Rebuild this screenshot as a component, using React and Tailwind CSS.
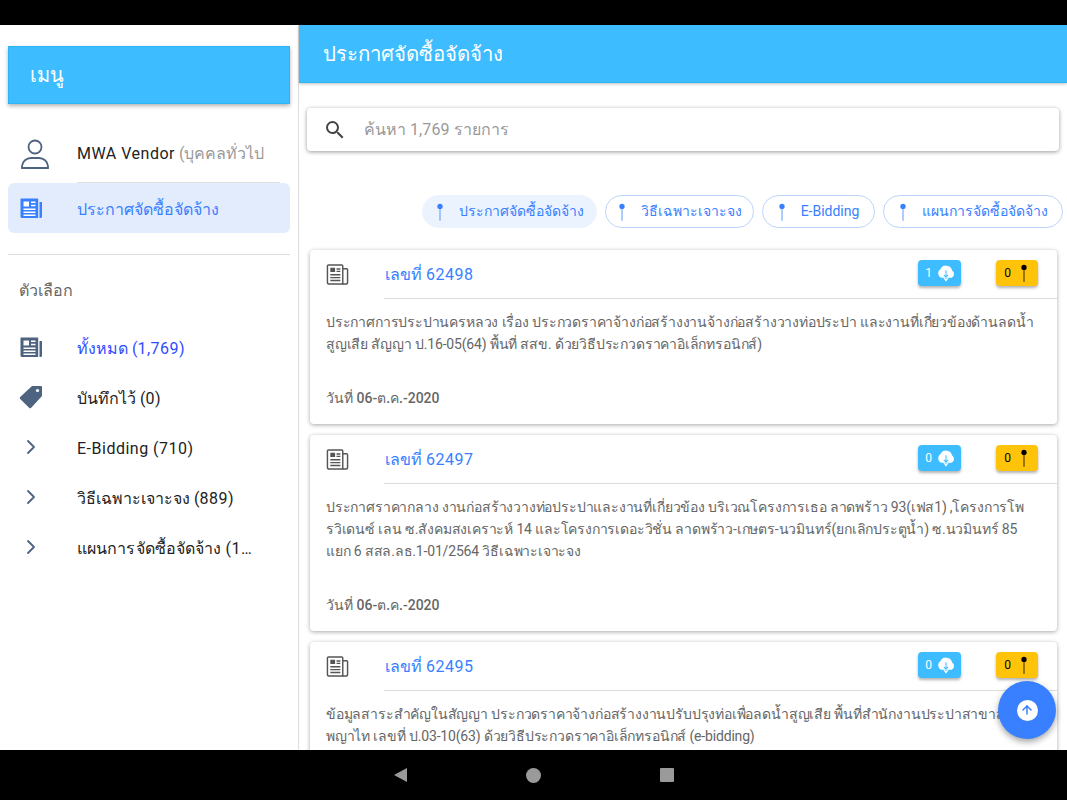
import React from "react";
import { ChevronRight, ArrowUp } from "lucide-react";

const Newspaper = ({ className }) => (
  <svg viewBox="0 0 24 24" className={className} fill="currentColor">
    <path d="M2 2.500h16.500a.7.7 0 0 1 .7.7V22H3a1.500 1.500 0 0 1-1.500-1.500V3A.5.5 0 0 1 2 2.500z" />
    <path d="M20.500 6H23v14.500a1.500 1.500 0 0 1-1.500 1.500h-1z" />
    <path fill="#fff" d="M4.500 5.500H10v5H4.500zM12 5.500h4.500v1.500H12zM12 8.800h4.500v1.500H12zM4.500 12.500h12V14h-12zM4.500 15.500h12V17h-12zM4.500 18.500h12V20h-12z" />
  </svg>
);

const NewspaperOutline = ({ className }) => (
  <svg viewBox="0 0 24 24" className={className} fill="none" stroke="currentColor" strokeWidth="1.500">
    <path d="M2.500 2h14a1 1 0 0 1 1 1v19h-14a2 2 0 0 1-2-2V3a1 1 0 0 1 1-1z" />
    <path d="M17.500 6h4a1 1 0 0 1 1 1v13a2 2 0 0 1-2 2h-3" />
    <path fill="currentColor" stroke="none" d="M4.500 5h5v4.500h-5zM11 5.500h4V7h-4zM11 8h4v1.500h-4zM4.500 11.500H15V13H4.500zM4.500 14.500H15V16H4.500zM4.500 17.500H15V19H4.500z" />
  </svg>
);

const Pin = ({ className }) => (
  <svg viewBox="0 0 10 24" className={className} fill="currentColor">
    <circle cx="5" cy="5" r="3.300" />
    <rect x="4.500" y="5" width="1" height="18" />
  </svg>
);

const CloudDown = () => (
  <svg viewBox="0 0 24 20" className="h-[17px] w-[20px]" fill="#fff">
    <path d="M19.400 6.500A7.500 7.500 0 0 0 5.400 4.500 6 6 0 0 0 6 15h13a5 5 0 0 0 .4-8.500z" />
    <path d="M11.400 6h1.200v9h-1.200zM9 12l.8-.8 2.200 2.200 2.200-2.200.8.8-3 3z" fill="#3dbcff" />
    <path d="M11.400 15h1.200v2l1.400-2h1.300L12 20l-3.300-5H10l1.400 2z" />
  </svg>
);

const TagIcon = () => (
  <svg viewBox="0 0 24 24" className="h-[24px] w-[24px]" fill="#4d6380">
    <path d="M13 1h9a1 1 0 0 1 1 1v9L12.200 22.800a1.500 1.500 0 0 1-2.100 0L1.200 14a1.500 1.500 0 0 1 0-2.100z" />
    <circle cx="18.500" cy="5.500" r="1.600" fill="#fff" />
  </svg>
);

// latin and digits run a bit wider than the thai around them
const Wide = ({ children }) => <span className="tracking-[0.5px]">{children}</span>;

const chips = [
  { label: "ประกาศจัดซื้อจัดจ้าง", active: true, w: "w-[175px]" },
  { label: "วิธีเฉพาะเจาะจง", w: "w-[149px]" },
  { label: "E-Bidding", w: "w-[113px]" },
  { label: "แผนการจัดซื้อจัดจ้าง", w: "w-[180px]" },
];

const cards = [
  {
    no: "62498",
    down: 1,
    date: "06-ต.ค.-2020",
    lines: [
      "ประกาศการประปานครหลวง เรื่อง ประกวดราคาจ้างก่อสร้างงานจ้างก่อสร้างวางท่อประปา และงานที่เกี่ยวข้องด้านลดน้ำ",
      "สูญเสีย สัญญา ป.16-05(64) พื้นที่ สสข. ด้วยวิธีประกวดราคาอิเล็กทรอนิกส์)",
    ],
  },
  {
    no: "62497",
    down: 0,
    date: "06-ต.ค.-2020",
    lines: [
      "ประกาศราคากลาง งานก่อสร้างวางท่อประปาและงานที่เกี่ยวข้อง บริเวณโครงการเธอ ลาดพร้าว 93(เฟส1) ,โครงการโพ",
      "รวิเดนซ์ เลน ซ.สังคมสงเคราะห์ 14 และโครงการเดอะวิชั่น ลาดพร้าว-เกษตร-นวมินทร์(ยกเลิกประตูน้ำ) ซ.นวมินทร์ 85",
      "แยก 6 สสล.ลธ.1-01/2564 วิธีเฉพาะเจาะจง",
    ],
  },
  {
    no: "62495",
    down: 0,
    lines: [
      "ข้อมูลสาระสำคัญในสัญญา ประกวดราคาจ้างก่อสร้างงานปรับปรุงท่อเพื่อลดน้ำสูญเสีย พื้นที่สำนักงานประปาสาขาสุขุมวิท",
      "พญาไท เลขที่ ป.03-10(63) ด้วยวิธีประกวดราคาอิเล็กทรอนิกส์ (e-bidding)",
    ],
  },
];

const NoticeCard = ({ card }) => (
  <div className="mb-[11px] shrink-0 rounded bg-white shadow-[0_1px_4px_rgba(0,0,0,0.35)]">
    <div className="flex h-[48px] items-center pl-[16px] pr-[19px]">
      <NewspaperOutline className="h-[23px] w-[23px] text-[#555]" />
      <span className="ml-[36px] flex-1 pt-px text-[16px] text-[#3880ff]">
        เลขที่ <span className="tracking-[0.5px]">{card.no}</span>
      </span>
      <div className="mb-[2px] flex h-[26px] w-[43px] items-center justify-center gap-[4px] rounded bg-[#3dbcff] pl-[2px] text-[12px] text-white shadow-[0_2px_3px_rgba(0,0,0,0.3)]">
        {card.down}
        <CloudDown />
      </div>
      <div className="mb-[2px] ml-[35px] flex h-[26px] w-[42px] items-center justify-center gap-[9px] rounded bg-[#ffc409] pr-[2px] text-[12px] text-black shadow-[0_2px_3px_rgba(0,0,0,0.3)]">
        0
        <Pin className="h-[22px] w-[8px] text-black" />
      </div>
    </div>
    <div className="ml-[74px] h-px bg-[#dcdcdc]" />
    <div className="pl-4 pt-[12px] text-[14px] leading-[22px] tracking-[-0.18px] text-[#666]">
      {card.lines.map((line) => (
        <div key={line} className="whitespace-nowrap">{line}</div>
      ))}
    </div>
    {card.date ? (
      <div className="px-4 pb-[15px] pt-[32px] text-[14px] leading-[22px] text-[#666]">
        วันที่ <span className="font-medium">{card.date}</span>
      </div>
    ) : (
      <div className="h-[69px]" />
    )}
  </div>
);

const MenuRow = ({ icon, children, className = "" }) => (
  <div className={`flex h-[50px] items-center px-[11px] ${className}`}>
    <div className="flex w-[58px] shrink-0">{icon}</div>
    <div className="min-w-0 flex-1 truncate pt-[3px] text-[16px] text-[#222]">{children}</div>
  </div>
);

const chevron = <ChevronRight className="h-6 w-6 text-[#4d6380]" strokeWidth={1.800} />;

export default function App() {
  return (
    <div className="relative flex h-[800px] w-[1067px] flex-col overflow-hidden bg-white font-['Roboto','Noto_Sans','Liberation_Sans',sans-serif]">
      <div className="h-[25px] shrink-0 bg-black" />
      <div className="flex min-h-0 flex-1">
        {/* sidebar */}
        <aside className="w-[299px] shrink-0 border-r border-[#dedede] pl-2 pr-2">
          <div className="mt-[21px] flex h-[58px] items-center border border-[#2bb5f5] bg-[#3dbcff] pl-[21px] text-[20px] text-white shadow-[0_2px_4px_rgba(0,0,0,0.3)]">
            เมนู
          </div>
          <div className="mt-[21px] flex h-[58px] items-center pl-[12px]">
            <svg viewBox="0 0 30 32" className="h-[32px] w-[30px] text-[#4d6380]" fill="none" stroke="currentColor" strokeWidth="1.800">
              <circle cx="15" cy="9" r="6.500" />
              <path d="M2 30v-2a9 9 0 0 1 9-8h8a9 9 0 0 1 9 8v2z" />
            </svg>
            <div className="ml-[27px] mr-[10px] flex h-full flex-1 items-center overflow-hidden whitespace-nowrap border-b border-[#dedede] text-[16px] text-[#222]">
              <Wide>MWA Vendor</Wide>&nbsp;<span className="text-[#999]">(บุคคลทั่วไป</span>
            </div>
          </div>
          <MenuRow
            className="rounded-md bg-[#e3ecfd]"
            icon={<Newspaper className="h-[24px] w-[24px] text-[#3880ff]" />}
          >
            <span className="text-[#3880ff]">ประกาศจัดซื้อจัดจ้าง</span>
          </MenuRow>
          <div className="mt-[21px] h-px bg-[#dcdcdc]" />
          <div className="mb-[19px] ml-[11px] mt-[24px] text-[16px] leading-[24px] text-[#666]">ตัวเลือก</div>
          <MenuRow icon={<Newspaper className="h-[24px] w-[24px] text-[#4d6380]" />}>
            <span className="text-[#2f4dff]">ทั้งหมด (<Wide>1,769</Wide>)</span>
          </MenuRow>
          <MenuRow icon={<TagIcon />}>บันทึกไว้ (<Wide>0</Wide>)</MenuRow>
          <MenuRow icon={chevron}><Wide>E-Bidding (710)</Wide></MenuRow>
          <MenuRow icon={chevron}>วิธีเฉพาะเจาะจง (<Wide>889</Wide>)</MenuRow>
          <MenuRow icon={chevron}>
            <span className="block w-[181px] truncate tracking-[0.1px]">แผนการจัดซื้อจัดจ้าง <Wide>(170)</Wide></span>
          </MenuRow>
        </aside>

        {/* main */}
        <main className="flex min-w-0 flex-1 flex-col">
          <div className="flex h-[58px] shrink-0 items-center border-b border-[#2bb5f5] bg-[#3dbcff] pl-6 pt-px text-[20.400px] text-white shadow-[0_1px_3px_rgba(0,0,0,0.25)]">
            ประกาศจัดซื้อจัดจ้าง
          </div>
          <div className="flex min-h-0 flex-1 flex-col overflow-hidden pl-[11px] pr-[10px]">
            <div className="-ml-[3px] mr-[-2px] mt-[25px] flex h-[43px] shrink-0 items-center rounded-sm bg-white pl-[16px] text-[16px] text-[#999] shadow-[0_1px_4px_rgba(0,0,0,0.4)]">
              <svg viewBox="0 0 24 24" className="h-[24px] w-[24px]" fill="#444">
                <path d="M15.500 14h-.79l-.28-.27A6.471 6.471 0 0 0 16 9.500 6.500 6.500 0 1 0 9.500 16c1.610 0 3.090-.59 4.230-1.570l.27.28v.79l5 4.990L20.490 19l-4.990-5zm-6 0C7.010 14 5 11.990 5 9.500S7.010 5 9.500 5 14 7.010 14 9.500 11.990 14 9.500 14z" />
              </svg>
              <span className="ml-[17px]">ค้นหา <span className="tracking-[0.1px]">1,769</span> รายการ</span>
            </div>
            <div className="mr-[-6px] mt-[44px] flex shrink-0 justify-end gap-[8px]">
              {chips.map((chip) => (
                <div
                  key={chip.label}
                  className={`flex h-[33px] items-center justify-center gap-[15px] rounded-full border text-[14px] text-[#3880ff] ${chip.w} ${
                    chip.active ? "border-[#ebf3fe] bg-[#ebf3fe]" : "border-[#bcd4fb] bg-white"
                  }`}
                >
                  <Pin className="h-[22px] w-[8px] text-[#3880ff]" />
                  {chip.label}
                </div>
              ))}
            </div>
            <div className="mt-[22px]">
              {cards.map((card) => (
                <NoticeCard key={card.no} card={card} />
              ))}
            </div>
          </div>
        </main>
      </div>

      {/* android nav */}
      <div className="flex h-[50px] shrink-0 items-center justify-center gap-[119px] bg-black pl-[1px]">
        <div className="h-[14px] w-[13px] bg-[#9a9a9a] [clip-path:polygon(100%_0,100%_100%,0_50%)]" />
        <div className="h-[15px] w-[15px] rounded-full bg-[#9a9a9a]" />
        <div className="h-[14px] w-[14px] rounded-[1px] bg-[#9a9a9a]" />
      </div>

      <button className="absolute left-[998px] top-[681px] flex h-[58px] w-[58px] items-center justify-center rounded-full bg-[#3880ff] shadow-[0_3px_6px_rgba(0,0,0,0.35)]">
        <span className="flex h-[21px] w-[21px] items-center justify-center rounded-full bg-white">
          <ArrowUp className="h-[14px] w-[14px] text-[#3880ff]" strokeWidth={2.500} />
        </span>
      </button>
    </div>
  );
}
